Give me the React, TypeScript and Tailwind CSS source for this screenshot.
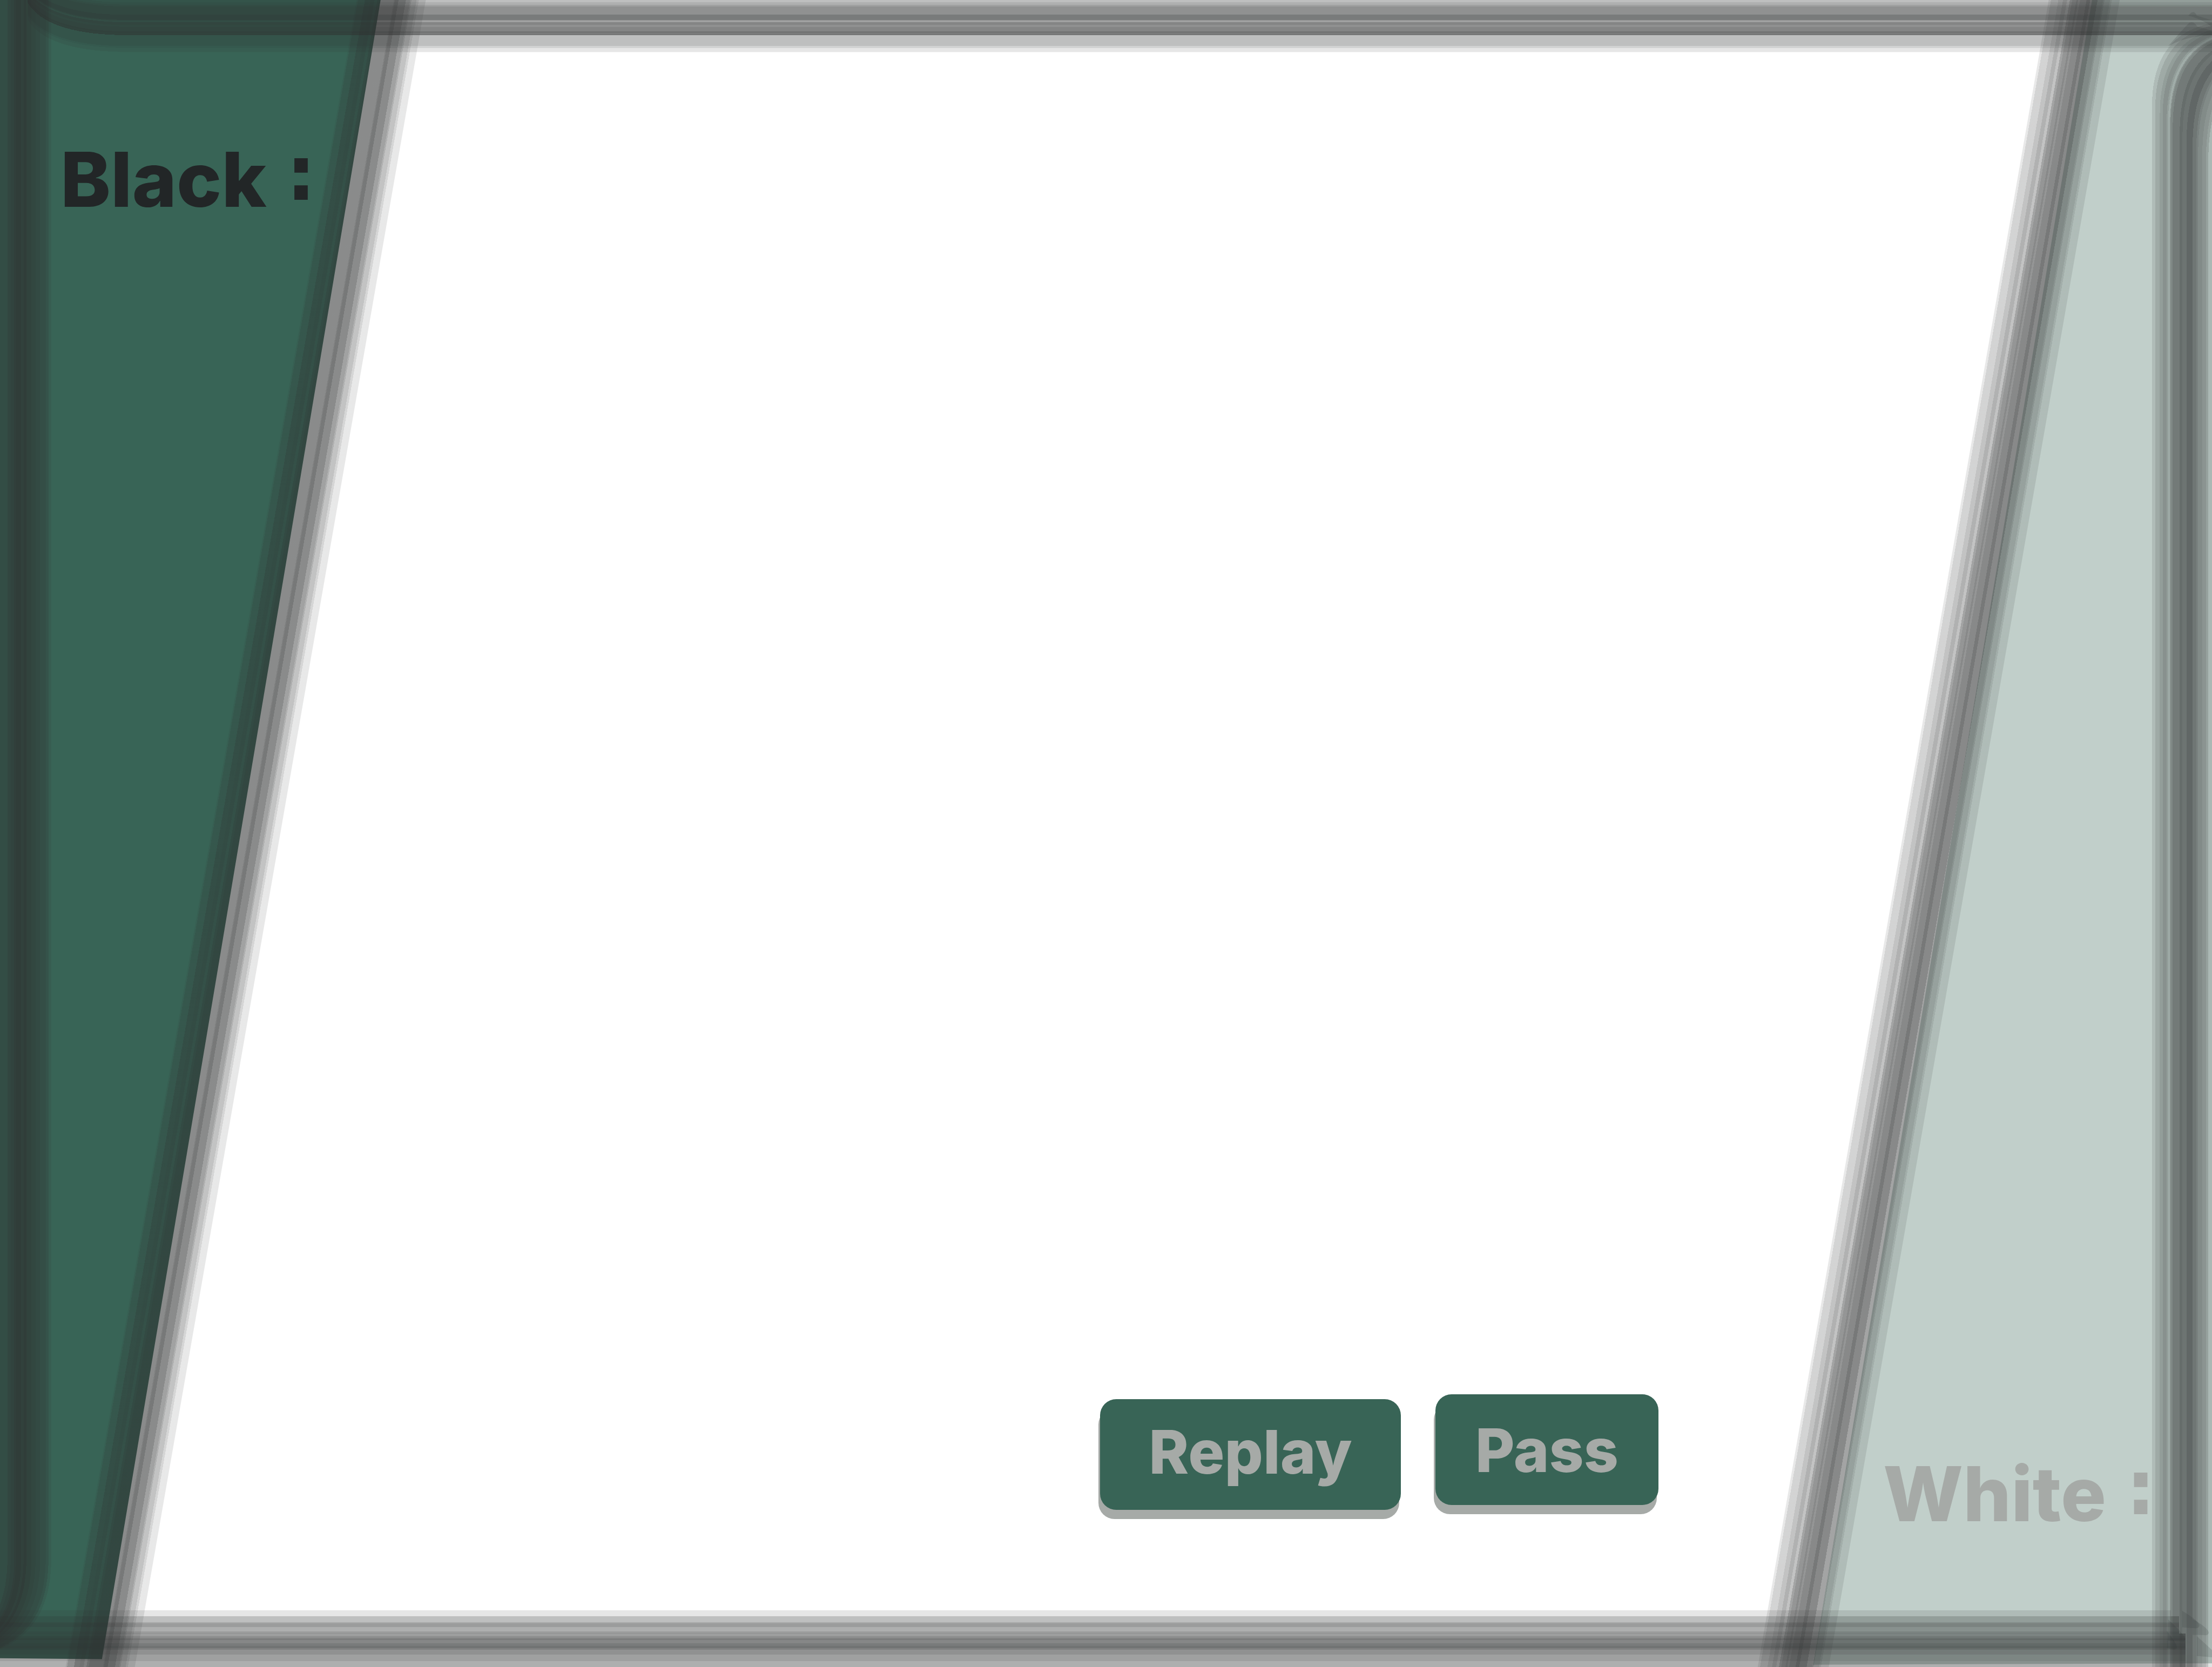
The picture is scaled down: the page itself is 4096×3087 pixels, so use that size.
import type { ReactNode } from "react";

/** One strip of a brush stroke: where it ends (from the stroke's edge) and how dense it is. */
type Strip = [end: number, density: number];

const INK = "#2e3030";

const TOP: Strip[] = [
  [5, 0.31], [10, 0.38], [14, 0.46], [32, 0.53], [43, 0.64], [45, 0.53], [48, 0.45], [54, 0.59],
  [58, 0.53], [68, 0.59], [71, 0.67], [75, 0.63], [76, 0.71], [100, 0.31], [104, 0.22], [112, 0.12], [113, 0.06],
];

const BOTTOM: Strip[] = [
  [13, 0.12], [26, 0.31], [28, 0.41], [36, 0.48], [46, 0.39], [49, 0.47], [51, 0.54], [56, 0.47],
  [61, 0.55], [64, 0.63], [72, 0.58], [77, 0.64], [82, 0.68], [86, 0.61], [96, 0.53], [110, 0.46], [123, 0.39],
];

const LEFT: Strip[] = [
  [16, 0.44], [23, 0.58], [31, 0.64], [35, 0.71], [46, 0.76], [51, 0.68], [57, 0.76], [68, 0.63],
  [77, 0.56], [87, 0.5], [99, 0.41], [105, 0.3], [111, 0.12],
];

const RIGHT: Strip[] = [
  [7, 0.12], [17, 0.23], [23, 0.31], [32, 0.39], [35, 0.31], [39, 0.22], [41, 0.39], [45, 0.45],
  [60, 0.53], [66, 0.62], [75, 0.57], [88, 0.65], [96, 0.56], [100, 0.49], [109, 0.43], [117, 0.37],
  [122, 0.29], [130, 0.14],
];

const SLANT_LEFT: Strip[] = [
  [3, 0.1], [18, 0.25], [30, 0.43], [39, 0.47], [45, 0.38], [50, 0.5], [68, 0.56], [81, 0.56],
  [83, 0.61], [91, 0.65], [107, 0.56], [116, 0.45], [119, 0.38], [130, 0.29], [135, 0.2], [150, 0.11],
];

const SLANT_RIGHT: Strip[] = [
  [5, 0.11], [21, 0.21], [31, 0.29], [40, 0.375], [46, 0.29], [51, 0.44], [60, 0.51], [64, 0.57],
  [68, 0.51], [82, 0.57], [90, 0.65], [106, 0.57], [118, 0.44], [121, 0.38], [133, 0.29], [137, 0.21], [154, 0.12],
];

function strips(data: Strip[], draw: (from: number, to: number) => string) {
  return data.map(([to, density], i) => (
    <path key={to} d={draw(i ? data[i - 1][0] : 0, to)} fill={INK} fillOpacity={density} />
  ));
}

function Slant({ id, x, data }: { id: string; x: number; data: Strip[] }) {
  const width = data[data.length - 1][0];
  return (
    <>
      <linearGradient id={id}>
        {data.flatMap(([to, density], i) => [
          <stop key={`${to}a`} offset={(i ? data[i - 1][0] : 0) / width} stopColor={INK} stopOpacity={density} />,
          <stop key={`${to}b`} offset={to / width} stopColor={INK} stopOpacity={density} />,
        ])}
      </linearGradient>
      <g transform="skewX(-9.9)">
        <rect x={x} y="0" width={width} height="3614" fill={`url(#${id})`} />
      </g>
    </>
  );
}

function Backdrop() {
  return (
    <svg
      aria-hidden="true"
      viewBox="0 0 4795 3614"
      preserveAspectRatio="none"
      className="absolute inset-0 h-full w-full"
    >
      <path d="M0 0H825L221 3597L0 3595Z" fill="#386456" />
      <path d="M4535 0H4795V3606L3930 3609Z" fill="#c1cfca" />
      <Slant id="slant-left" x={773} data={SLANT_LEFT} />
      <Slant id="slant-right" x={4441} data={SLANT_RIGHT} />
      <g shapeRendering="crispEdges">
        {strips(
          TOP,
          (a, b) =>
            `M4795 ${a}H260Q100 ${a - 4} 60 ${a - 70}V${b - 70}Q100 ${b - 4} 260 ${b}H4795Z`,
        )}
        {strips(BOTTOM, (a, b) => `M0 ${3491 + a}H${a < 13 ? 4706 : a < 50 ? 4724 : 4738}V${3491 + b}H0Z`)}
        {strips(
          LEFT,
          (a, b) =>
            `M${a} 0V3390Q${a - 4} 3530 ${a - 110} 3575H${b - 110}Q${b - 4} 3530 ${b} 3390V0Z`,
        )}
        {strips(
          RIGHT,
          (a, b) =>
            `M${4665 + a} 3614V${230 + a}Q${4665 + a} ${75 + a * 0.6} ${4795 + a} ${50 + a * 0.6}H${4795 + b}V${50 + b * 0.6}Q${4665 + b} ${75 + b * 0.6} ${4665 + b} ${230 + b}V3614Z`,
        )}
      </g>
      <g fill={INK} fillOpacity="0.16">
        <path d="M4730 3492Q4768 3515 4768 3524Q4767 3530 4760 3530L4730 3528Z" />
        <path d="M4753 3510Q4788 3530 4788 3540Q4786 3546 4780 3545L4753 3544Z" />
        <path d="M4700 3511Q4736 3544 4737 3554Q4735 3560 4728 3558L4700 3557Z" />
        <path d="M4697 3536Q4718 3562 4719 3572Q4716 3577 4710 3576L4697 3573Z" />
        <path d="M4762 3547L4795 3577V3593L4762 3590Z" />
        <path d="M4700 100Q4735 60 4745 50Q4755 44 4763 58L4795 66V76Q4740 78 4700 100Z" />
        <path d="M4744 34Q4755 18 4762 34L4795 44V58Q4770 40 4744 34Z" />
      </g>
    </svg>
  );
}

function PlayerLabel({ name, className }: { name: string; className: string }) {
  return (
    <h2 className={`flex items-center gap-9 text-[140px] leading-none font-extrabold ${className}`}>
      {name}
      <span className="pb-5 font-['DejaVu_Sans'] font-bold">:</span>
    </h2>
  );
}

function ActionButton({ children, className }: { children: ReactNode; className: string }) {
  return (
    <button
      type="button"
      className={`h-[205px] rounded-[30px] bg-[#386456] text-[112px] leading-none font-extrabold text-[#a6aaa7] shadow-[-3px_17px_0_#a6aaa7] ${className}`}
    >
      {children}
    </button>
  );
}

export default function App() {
  return (
    <main className="relative flex min-h-screen justify-between overflow-hidden bg-white font-[Inter,sans-serif]">
      <Backdrop />
      <section className="relative pt-[252px] pl-[112px]">
        <PlayerLabel name="Black" className="text-[#222627]" />
      </section>
      <div className="relative flex flex-1 items-end justify-end gap-16 pb-[291px]">
        <ActionButton className="px-[90px] pb-3">Replay</ActionButton>
        <ActionButton className="mb-[9px] px-[74px]">Pass</ActionButton>
      </div>
      <section className="relative flex items-end pr-[104px] pb-[241px] pl-[416px]">
        <PlayerLabel name="White" className="text-[#a6aaa7]" />
      </section>
    </main>
  );
}
